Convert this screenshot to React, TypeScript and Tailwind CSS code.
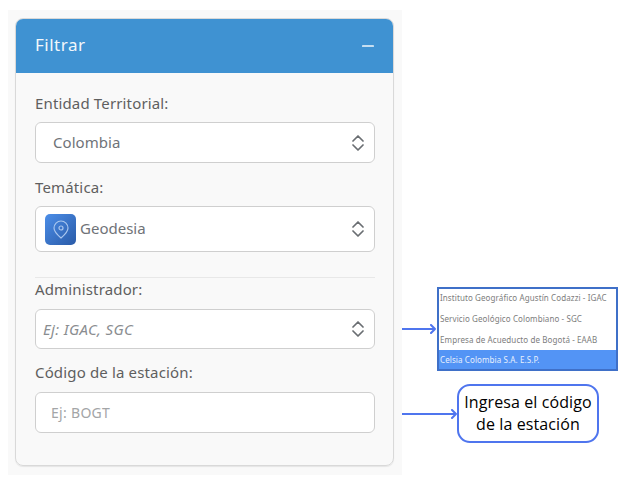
import { Minus } from 'lucide-react';

const FONT = "font-['Noto_Sans',sans-serif]";

function Chevrons() {
  return (
    <svg width="12" height="16" viewBox="0 0 12 16" fill="none" stroke="#6a6e72" strokeWidth="1.7" strokeLinecap="round" strokeLinejoin="round" className="shrink-0">
      <path d="M1 6 6 1l5 5" />
      <path d="M1 10l5 5 5-5" />
    </svg>
  );
}

function Label({ children }: { children: string }) {
  return <p className="text-[15px] leading-5 tracking-[0.15px] text-[#5f5f5f]">{children}</p>;
}

function GeoIcon() {
  return (
    <div className="w-[31px] h-[31px] rounded-[5px] bg-gradient-to-br from-[#4c8ee8] to-[#2a5ba8] flex items-center justify-center shrink-0">
      <svg width="16" height="19" viewBox="0 0 16 19" fill="none" stroke="#a9c6ee" strokeWidth="1.2">
        <path d="M8 18C4.5 15 1 11.5 1 8a7 7 0 0 1 14 0c0 3.5-3.5 7-7 10z" />
        <circle cx="8" cy="8" r="2" />
      </svg>
    </div>
  );
}

function ArrowRight({ width }: { width: number }) {
  return (
    <svg width={width} height="10" viewBox={`0 0 ${width} 10`} fill="none" stroke="#4f75ee" strokeWidth="2" strokeLinecap="round" strokeLinejoin="round" className="shrink-0">
      <path d={`M0 5h${width - 1}M${width - 5} 1l4 4-4 4`} />
    </svg>
  );
}

const ADMINS = [
  'Instituto Geográfico Agustín Codazzi - IGAC',
  'Servicio Geológico Colombiano - SGC',
  'Empresa de Acueducto de Bogotá - EAAB',
];

export default function App() {
  return (
    <div className={`h-[479px] w-[628px] bg-white flex overflow-hidden ${FONT}`}>
      {/* Panel de filtros */}
      <div className="ml-2 mt-[10px] w-[394px] h-[465px] bg-[#f9f9f9] pl-[7px] pt-2 shrink-0">
        <div className="h-[448px] w-[379px] rounded-[8px] border border-[#d9d9d9] shadow-[0_1px_1px_rgba(0,0,0,0.08)] overflow-hidden">
          <div className="h-[54px] bg-[#3f92d2] flex items-center justify-between pl-[19px] pr-[17px] pb-[2px]">
            <span className="text-[17px] tracking-[0.5px] text-[#f2f7fb]">Filtrar</span>
            <Minus size={16} strokeWidth={2.6} color="#f2f7fb" className="mt-[1px] scale-x-110" />
          </div>
          <div className="pl-[19px] pr-[18px] pt-[20px]">
            <Label>Entidad Territorial:</Label>
            <div className="mt-[9px] h-[41px] rounded-[6px] border border-[#cfcfcf] bg-white flex items-center justify-between pl-[17px] pr-[10px]">
              <span className="text-[15px] tracking-[0.05px] text-[#6f7378] mb-[1px]">Colombia</span>
              <Chevrons />
            </div>
            <div className="mt-[14px]">
              <Label>Temática:</Label>
            </div>
            <div className="mt-[9px] h-[46px] rounded-[6px] border border-[#cfcfcf] bg-white flex items-center pl-[9px] pr-[10px]">
              <GeoIcon />
              <span className="ml-[4px] text-[15px] tracking-[0px] text-[#6f7378] mb-[1px]">Geodesia</span>
              <span className="ml-auto">
                <Chevrons />
              </span>
            </div>
            <div className="mt-[25px] border-t border-[#e8e8e8]" />
            <div className="mt-[1px]">
              <Label>Administrador:</Label>
            </div>
            <div className="mt-[10px] h-[40px] rounded-[6px] border border-[#cfcfcf] bg-white flex items-center justify-between pl-[7px] pr-[10px]">
              <span className="text-[15px] italic tracking-[0.35px] text-[#8a8d90]">Ej: IGAC, SGC</span>
              <Chevrons />
            </div>
            <div className="mt-[13px]">
              <Label>Código de la estación:</Label>
            </div>
            <div className="mt-[10px] h-[41px] rounded-[6px] border border-[#cfcfcf] bg-white flex items-center pl-[15px]">
              <span className="text-[14px] tracking-[0.3px] text-[#a3a5a7]">Ej: BOGT</span>
            </div>
          </div>
        </div>
      </div>

      {/* Anotaciones */}
      <div className="flex-1 pt-[287px]">
        <div className="flex items-center">
          <ArrowRight width={34} />
          <div className="w-[181px] h-[84px] border-2 border-[#3f70c8] bg-white flex flex-col shrink-0 ml-px">
            <div className="-mt-[2px]">
              {ADMINS.map((name) => (
                <div key={name} className="h-[21px] flex items-center pl-[1px] text-[8px] tracking-[0.1px] whitespace-nowrap text-[#7d7d7d]">
                  {name}
                </div>
              ))}
            </div>
            <div className="flex-1 bg-[#5394f5] flex items-center pl-[1px] text-[8px] tracking-[0.1px] text-[#e8f0fd]">
              Celsia Colombia S.A. E.S.P.
            </div>
          </div>
        </div>
        <div className="mt-[13px] flex items-center">
          <ArrowRight width={55} />
          <div className="w-[142px] h-[59px] rounded-[13px] border-2 border-[#4f75ee] bg-white flex items-center justify-center shrink-0 font-['Open_Sans',sans-serif] text-[16px] leading-[22px] text-center text-black tracking-[0.1px] pb-[2px]">
            Ingresa el código
            <br />
            de la estación
          </div>
        </div>
      </div>
    </div>
  );
}
